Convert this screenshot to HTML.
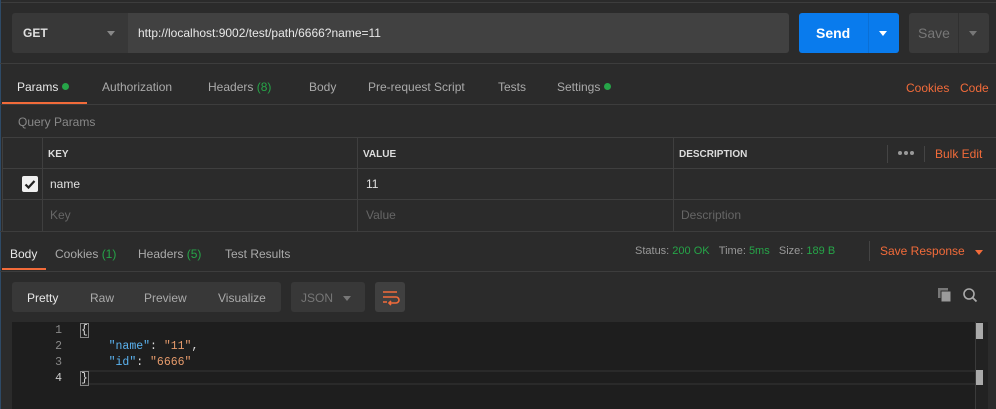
<!DOCTYPE html><html><head><style>
*{margin:0;padding:0;box-sizing:border-box}
body{width:996px;height:409px;background:#2b2b2b;font-family:"Liberation Sans",sans-serif;font-size:12px;color:#ccc;position:relative;overflow:hidden}
.a{position:absolute;white-space:nowrap}
.g{color:#26a548}.o{color:#f26b3a}
.dot{display:inline-block;width:7px;height:7px;border-radius:50%;background:#26a548;margin-left:4px;vertical-align:1px}
.tri{position:absolute;width:0;height:0;border-left:4px solid transparent;border-right:4px solid transparent;border-top:5px solid #888}
.mono{font-family:"Liberation Mono",monospace;font-size:11.5px}
</style></head><body>
<div class="a" style="left:0;top:2px;width:996px;height:1px;background:#3d3d3d"></div>
<div class="a" style="left:0;top:0;width:1px;height:409px;background:#2e4a66"></div>
<!-- URL bar -->
<div class="a" style="left:12px;top:13px;width:116px;height:40px;background:#383838;border-radius:3px 0 0 3px"></div>
<div class="a" style="left:23px;top:26px;font-weight:bold;color:#e0e0e0">GET</div>
<div class="tri" style="left:107px;top:31px"></div>
<div class="a" style="left:128px;top:13px;width:661px;height:40px;background:#414141;border-radius:0 3px 3px 0"></div>
<div class="a" style="left:138px;top:26px;color:#e8e8e8">http://localhost:9002/test/path/6666?name=11</div>
<div class="a" style="left:799px;top:13px;width:100px;height:40px;background:#097bed;border-radius:3px"></div>
<div class="a" style="left:868px;top:13px;width:1px;height:40px;background:#0a6fd5"></div>
<div class="a" style="left:816px;top:25px;color:#fff;font-weight:bold;font-size:14px">Send</div>
<div class="tri" style="left:879px;top:31px;border-top-color:#fff"></div>
<div class="a" style="left:909px;top:13px;width:80px;height:40px;background:#3a3a3a;border-radius:3px"></div>
<div class="a" style="left:958px;top:13px;width:1px;height:40px;background:#303030"></div>
<div class="a" style="left:918px;top:25px;color:#777;font-size:14px">Save</div>
<div class="tri" style="left:969px;top:31px;border-top-color:#777"></div>
<div class="a" style="left:0;top:63px;width:996px;height:1px;background:#3d3d3d"></div>
<!-- tabs -->
<div class="a" style="left:17px;top:80px;color:#e8e8e8">Params<span class="dot"></span></div>
<div class="a" style="left:102px;top:80px;color:#aaa">Authorization</div>
<div class="a" style="left:208px;top:80px;color:#aaa">Headers <span class="g">(8)</span></div>
<div class="a" style="left:309px;top:80px;color:#aaa">Body</div>
<div class="a" style="left:368px;top:80px;color:#aaa">Pre-request Script</div>
<div class="a" style="left:498px;top:80px;color:#aaa">Tests</div>
<div class="a" style="left:557px;top:80px;color:#aaa">Settings<span class="dot"></span></div>
<div class="a o" style="left:906px;top:81px">Cookies</div>
<div class="a o" style="left:960px;top:81px">Code</div>
<div class="a" style="left:2px;top:102px;width:85px;height:2px;background:#f26b3a"></div>
<div class="a" style="left:0;top:104px;width:996px;height:1px;background:#3d3d3d"></div>
<div class="a" style="left:18px;top:115px;color:#888">Query Params</div>
<!-- table -->
<div class="a" style="left:2px;top:137px;width:994px;height:94px;border-top:1px solid #3f3f3f;border-left:1px solid #3f3f3f"></div>
<div class="a" style="left:2px;top:168px;width:994px;height:1px;background:#3f3f3f"></div>
<div class="a" style="left:2px;top:199px;width:994px;height:1px;background:#3f3f3f"></div>
<div class="a" style="left:42px;top:137px;width:1px;height:94px;background:#3f3f3f"></div>
<div class="a" style="left:357px;top:137px;width:1px;height:94px;background:#3f3f3f"></div>
<div class="a" style="left:673px;top:137px;width:1px;height:94px;background:#3f3f3f"></div>
<div class="a" style="left:887px;top:145px;width:1px;height:18px;background:#444"></div>
<div class="a" style="left:924px;top:146px;width:1px;height:16px;background:#444"></div>
<div class="a" style="left:48px;top:149px;font-size:10px;font-weight:bold;color:#ddd">KEY</div>
<div class="a" style="left:363px;top:149px;font-size:10px;font-weight:bold;color:#ddd">VALUE</div>
<div class="a" style="left:679px;top:149px;font-size:10px;font-weight:bold;color:#ddd">DESCRIPTION</div>
<svg class="a" style="left:897px;top:150px" width="20" height="6"><circle cx="3" cy="3" r="2" fill="#999"/><circle cx="9" cy="3" r="2" fill="#999"/><circle cx="15" cy="3" r="2" fill="#999"/></svg>
<div class="a o" style="left:935px;top:147px">Bulk Edit</div>
<div class="a" style="left:22px;top:176px;width:16px;height:16px;background:#f0f0f0;border-radius:2px"><svg width="16" height="16"><path d="M3.5 8.5l3 3 6-6.5" stroke="#222" stroke-width="2.2" fill="none"/></svg></div>
<div class="a" style="left:50px;top:177px;color:#e0e0e0">name</div>
<div class="a" style="left:366px;top:177px;color:#e0e0e0">11</div>
<div class="a" style="left:50px;top:208px;color:#666">Key</div>
<div class="a" style="left:366px;top:208px;color:#666">Value</div>
<div class="a" style="left:681px;top:208px;color:#666">Description</div>
<div class="a" style="left:0;top:231px;width:996px;height:1px;background:#3d3d3d"></div>
<!-- response tabs -->
<div class="a" style="left:10px;top:247px;color:#e8e8e8">Body</div>
<div class="a" style="left:55px;top:247px;color:#aaa">Cookies <span class="g">(1)</span></div>
<div class="a" style="left:138px;top:247px;color:#aaa">Headers <span class="g">(5)</span></div>
<div class="a" style="left:225px;top:247px;color:#aaa">Test Results</div>
<div class="a" style="left:635px;top:245px;font-size:11px;color:#999">Status: <span class="g">200 OK</span>&nbsp;&nbsp;&nbsp;Time: <span class="g">5ms</span>&nbsp;&nbsp;&nbsp;Size: <span class="g">189 B</span></div>
<div class="a" style="left:869px;top:241px;width:1px;height:20px;background:#444"></div>
<div class="a o" style="left:880px;top:244px">Save Response</div>
<div class="tri" style="left:975px;top:250px;border-top-color:#f26b3a"></div>
<div class="a" style="left:2px;top:268px;width:44px;height:2px;background:#f26b3a"></div>
<div class="a" style="left:0;top:271px;width:996px;height:1px;background:#3d3d3d"></div>
<!-- toolbar -->
<div class="a" style="left:12px;top:282px;width:269px;height:30px;background:#383838;border-radius:3px"></div>
<div class="a" style="left:27px;top:291px;color:#e8e8e8">Pretty</div>
<div class="a" style="left:90px;top:291px;color:#aaa">Raw</div>
<div class="a" style="left:144px;top:291px;color:#aaa">Preview</div>
<div class="a" style="left:218px;top:291px;color:#aaa">Visualize</div>
<div class="a" style="left:291px;top:282px;width:74px;height:30px;background:#383838;border-radius:3px"></div>
<div class="a" style="left:301px;top:291px;color:#777">JSON</div>
<div class="tri" style="left:343px;top:296px;border-top-color:#777"></div>
<div class="a" style="left:375px;top:282px;width:30px;height:30px;background:#404040;border-radius:3px"><svg width="30" height="30"><path d="M8 10h14M8 15h13a3 3 0 0 1 0 6h-6M8 20h4M16 19l-2 2 2 2" stroke="#f26b3a" stroke-width="1.6" fill="none"/></svg></div>
<svg class="a" style="left:937px;top:287px" width="16" height="16"><rect x="1" y="1" width="10" height="10" fill="#777"/><rect x="4" y="4" width="10" height="11" fill="#9a9a9a" stroke="#2b2b2b"/></svg>
<svg class="a" style="left:962px;top:287px" width="16" height="16"><circle cx="7" cy="7" r="5" stroke="#aaa" stroke-width="1.6" fill="none"/><path d="M10.5 10.5l4 4" stroke="#aaa" stroke-width="1.8"/></svg>
<!-- editor -->
<div class="a" style="left:12px;top:322px;width:976px;height:87px;background:#1e1e1e"></div>
<div class="a" style="left:82px;top:370px;width:893px;height:15px;border-top:2px solid #2a2a2a;border-bottom:2px solid #2a2a2a"></div>
<div class="a" style="left:975px;top:322px;width:13px;height:87px;background:#222;border-left:1px solid #3a3a3a"></div>
<div class="a" style="left:976px;top:323px;width:7px;height:16px;background:#aaa"></div>
<div class="a" style="left:976px;top:370px;width:7px;height:15px;background:#aaa"></div>
<div class="a mono" style="left:54px;top:323px;line-height:16px;color:#888;text-align:right;width:8px">1<br>2<br>3<br><span style="color:#ccc">4</span></div>
<div class="a mono" style="left:81px;top:323px;line-height:16px;color:#ddd">
<span style="outline:1px solid #888">{</span><br>
&nbsp;&nbsp;&nbsp;&nbsp;<span style="color:#5bb3f0">"name"</span>: <span style="color:#e59a6b">"11"</span>,<br>
&nbsp;&nbsp;&nbsp;&nbsp;<span style="color:#5bb3f0">"id"</span>: <span style="color:#e59a6b">"6666"</span><br>
<span style="outline:1px solid #888">}</span></div>
</body></html>
